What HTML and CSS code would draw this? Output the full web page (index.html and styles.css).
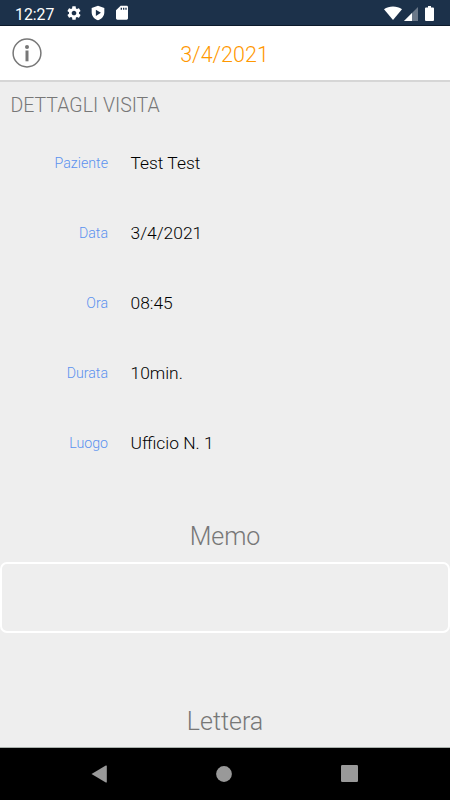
FILE: index.html
```
<!DOCTYPE html>
<html lang="it">
<head>
    <meta charset="utf-8">
    <title>Dettagli visita</title>
    <link rel="stylesheet" href="styles.css">
</head>
<body>
    <div class="status-bar">
        <span class="clock">12:27</span>
        <svg class="status-icon" viewBox="0 0 24 24"><path d="M19.43 12.98c.04-.32.07-.64.07-.98s-.03-.66-.07-.98l2.11-1.65c.19-.15.24-.42.12-.64l-2-3.46c-.12-.22-.39-.3-.61-.22l-2.49 1c-.52-.4-1.08-.73-1.69-.98l-.38-2.65C14.46 2.18 14.25 2 14 2h-4c-.25 0-.46.18-.49.42l-.38 2.65c-.61.25-1.17.59-1.69.98l-2.49-1c-.23-.09-.49 0-.61.22l-2 3.46c-.13.22-.07.49.12.64l2.11 1.65c-.04.32-.07.65-.07.98s.03.66.07.98l-2.11 1.65c-.19.15-.24.42-.12.64l2 3.46c.12.22.39.3.61.22l2.49-1c.52.4 1.08.73 1.69.98l.38 2.65c.03.24.24.42.49.42h4c.25 0 .46-.18.49-.42l.38-2.65c.61-.25 1.17-.59 1.69-.98l2.49 1c.23.09.49 0 .61-.22l2-3.46c.12-.22.07-.49-.12-.64l-2.11-1.65zM12 15.5c-1.93 0-3.5-1.57-3.5-3.5s1.57-3.5 3.5-3.5 3.5 1.57 3.5 3.5-1.57 3.5-3.5 3.5z"/></svg>
        <svg class="status-icon" viewBox="0 0 24 24"><path fill-rule="evenodd" d="M12 1L2.500 4.500V11c0 5.500 3.800 10.300 9.500 12 5.700-1.700 9.500-6.500 9.500-12V4.500zM8.800 7v9.500l7.600-4.750z"/></svg>
        <svg class="status-icon" viewBox="0 0 24 24"><path d="M19 1h-9L3 8v12c0 1.100.9 2 2 2h14c1.100 0 2-.9 2-2V3c0-1.100-.9-2-2-2zm-7 6h-2V4h2v3zm3.500 0h-2V4h2v3zm3.500 0h-2V4h2v3z"/></svg>
        <div class="status-right">
            <svg width="18" height="15" viewBox="0 0 18 15"><path d="M0 3.200C5 -.3 13 -.3 18 3.200L9 14z"/></svg>
            <svg width="14" height="15" viewBox="0 0 14 15"><path d="M0 15L14 1v14z" fill-opacity=".35"/><path d="M0 15L8 7v8z"/></svg>
            <svg class="battery" width="9" height="15" viewBox="0 0 9 15"><path d="M3 0h3v1.500h2q1 0 1 1V14q0 1-1 1H1q-1 0-1-1V2.500q0-1 1-1h2z"/></svg>
        </div>
    </div>

    <div class="header">
        <svg class="info-icon" viewBox="0 0 30 30">
            <circle cx="15" cy="15" r="13.900" fill="none" stroke="#777" stroke-width="1.500"/>
            <circle cx="15" cy="9.100" r="2" fill="#777"/>
            <path d="M13.500 12.500h3v10.800h-3z" fill="#777"/>
        </svg>
        <h1 class="title">3/4/2021</h1>
    </div>

    <div class="content">
        <h2 class="section-title">DETTAGLI VISITA</h2>

        <div class="row">
            <span class="label">Paziente</span>
            <span class="value">Test Test</span>
        </div>
        <div class="row">
            <span class="label">Data</span>
            <span class="value">3/4/2021</span>
        </div>
        <div class="row">
            <span class="label">Ora</span>
            <span class="value">08:45</span>
        </div>
        <div class="row">
            <span class="label">Durata</span>
            <span class="value">10min.</span>
        </div>
        <div class="row">
            <span class="label">Luogo</span>
            <span class="value">Ufficio N. 1</span>
        </div>

        <h3 class="block-title">Memo</h3>
        <div class="memo-box"></div>
        <h3 class="block-title letter-title">Lettera</h3>
    </div>

    <div class="nav-bar">
        <svg width="16" height="18" viewBox="0 0 16 18"><path d="M.5 9L14.800.6q1-.5 1 .5v15.800q0 1-1 .5z"/></svg>
        <svg width="16" height="16" viewBox="0 0 16 16"><circle cx="8" cy="8" r="7.900"/></svg>
        <svg width="17" height="17" viewBox="0 0 17 17"><rect width="17" height="17" rx="1.200"/></svg>
    </div>
</body>
</html>
```
FILE: styles.css
```
* {
    box-sizing: border-box;
}

body {
    display: flex;
    flex-direction: column;
    height: 800px;
    margin: 0;
    overflow: hidden;
    font-family: Roboto, sans-serif;
    font-weight: 300;
    background-color: #eee;
}

h1, h2, h3 {
    margin: 0;
    font-weight: 300;
}

svg {
    display: block;
    flex: none;
}

.status-bar {
    display: flex;
    align-items: center;
    gap: 8px;
    height: 26px;
    padding: 1px 16px 0 15px;
    background-color: #1c314a;
    border-bottom: 1px solid #0c1a2b;
    color: #fff;
    fill: #fff;
}

.clock {
    width: 43px;
    font-size: 15.8px;
    font-weight: 400;
    line-height: 24px;
    padding-top: 3px;
}

.status-icon {
    width: 16px;
    height: 16px;
}

.status-right {
    display: flex;
    gap: 2px;
    margin-left: auto;
}

.battery {
    margin-left: 5px;
}

.header {
    display: grid;
    grid-template-columns: 30px 1fr 30px;
    align-items: center;
    height: 56px;
    padding: 0 13px 0 12px;
    background-color: #fff;
    border-bottom: 2px solid #d6d6d6;
}

.info-icon {
    width: 30px;
    height: 30px;
}

.title {
    padding-top: 4px;
    font-size: 21.5px;
    line-height: 26px;
    text-align: center;
    color: #ff9800;
}

.content {
    flex: 1;
    border-bottom: 1px solid #a9b0ac;
}

.section-title {
    height: 46px;
    padding: 1px 0 0 10.5px;
    font-size: 19.5px;
    line-height: 46px;
    color: #777;
}

.row {
    display: flex;
    align-items: center;
    gap: 22.5px;
    height: 70px;
}

.label {
    width: 108px;
    font-size: 14.2px;
    text-align: right;
    color: #5b92ee;
}

.value {
    font-size: 17.4px;
    line-height: 20px;
    color: #000;
}

.block-title {
    height: 84px;
    padding-top: 42px;
    font-size: 25px;
    line-height: 33px;
    text-align: center;
    color: #777;
}

.memo-box {
    height: 71px;
    border: 2px solid #fff;
    border-radius: 7px;
}

.letter-title {
    margin-top: 30px;
}

.nav-bar {
    display: flex;
    justify-content: space-between;
    align-items: center;
    height: 52px;
    padding: 0 92px 1px 91px;
    background-color: #000;
    fill: #999;
}
```
